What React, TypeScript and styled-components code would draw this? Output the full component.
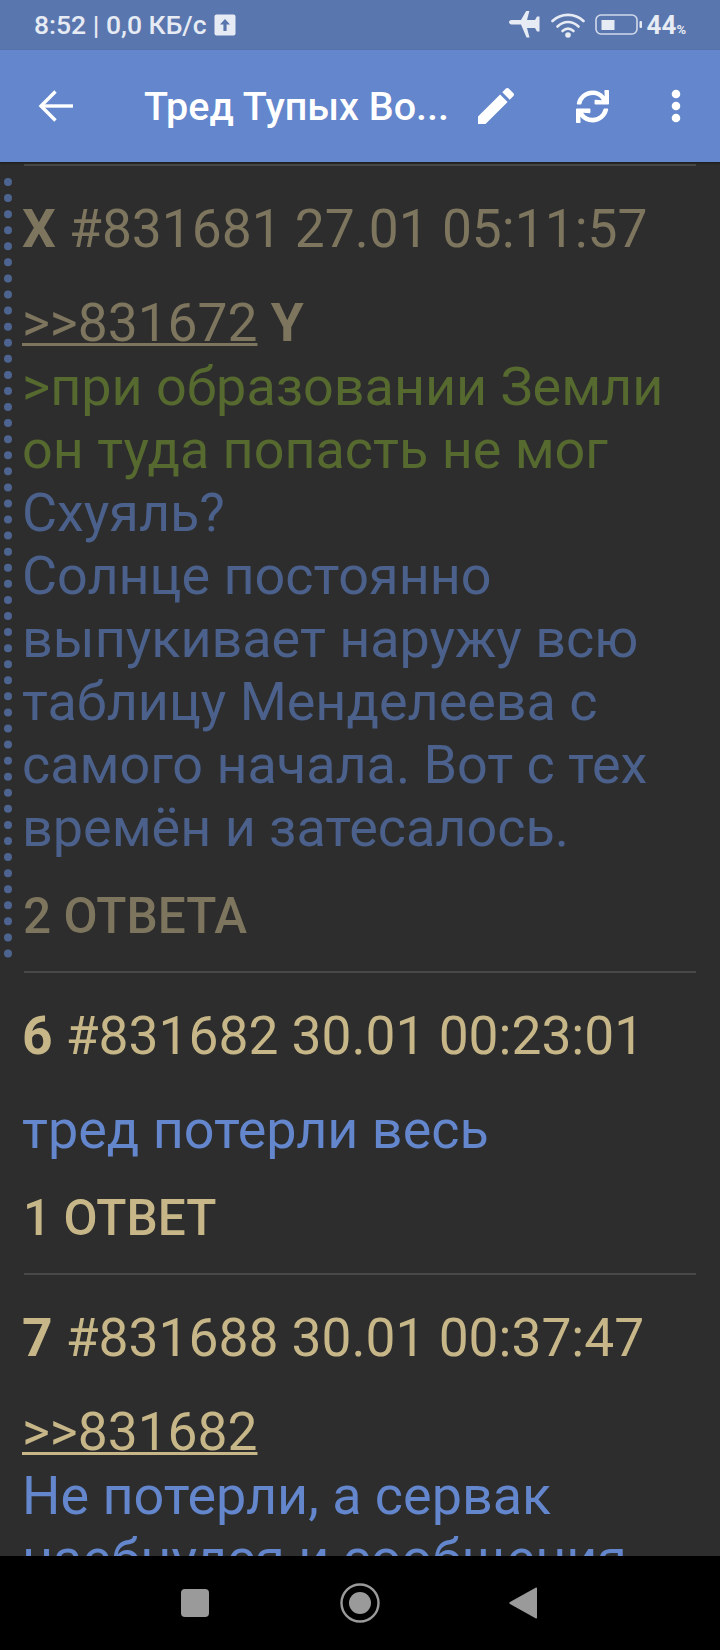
import React from "react";
import styled, { createGlobalStyle } from "styled-components";
import { FaSync } from "react-icons/fa";

const Global = createGlobalStyle`
  html, body { margin: 0; padding: 0; background: #2d2d2d; }
  body { font-family: Roboto, "Liberation Sans", sans-serif; }
`;

const Screen = styled.div`
  width: 720px;
  height: 1650px;
  display: flex;
  flex-direction: column;
  overflow: hidden;
  background: #2d2d2d;
`;

const StatusBar = styled.div`
  height: 49px;
  flex: none;
  background: #5a76ae;
  color: #e6ebf4;
  display: flex;
  align-items: center;
  justify-content: space-between;
  padding: 0 34px 1px 34px;
  font-size: 26.5px;
  font-weight: 500;
`;

const StatusGroup = styled.div`
  display: flex;
  align-items: center;
`;

const StatusText = styled.span``;

const Battery = styled.span`
  font-size: 26px;
  font-weight: 700;
  margin-left: 5px;
  display: flex;
  align-items: baseline;
`;

const Percent = styled.span`
  font-size: 13px;
`;

const AppBar = styled.div`
  height: 112px;
  flex: none;
  background: #6386cc;
  color: #fff;
  display: flex;
  align-items: center;
  position: relative;
  box-shadow: 0 1px 2px rgba(0, 0, 0, 0.45);
`;

const BackSlot = styled.div`
  width: 144px;
  flex: none;
  padding-left: 38px;
  box-sizing: border-box;
  display: flex;
`;

const Title = styled.div`
  width: 328px;
  flex: none;
  font-size: 39.5px;
  font-weight: 500;
  white-space: nowrap;
`;

const Actions = styled.div`
  display: flex;
  align-items: center;
`;

const ActionSlot = styled.div<{ $w: number }>`
  width: ${(p) => p.$w}px;
  flex: none;
  display: flex;
  justify-content: center;
`;

const Content = styled.div`
  flex: 1;
  min-height: 0;
  overflow: hidden;
  background: #2d2d2d;
  padding-top: 2px;
`;

const Post = styled.article<{ $dim?: boolean }>`
  box-sizing: border-box;
  color: ${(p) => (p.$dim ? "#7d755d" : "#c7b788")};
  padding: 32px 24px 27px 22px;
  position: relative;
`;

const Rule = styled.div`
  height: 2px;
  background: #484848;
  margin: 0 24px;
`;

const Dots = styled.div`
  position: absolute;
  left: 4px;
  top: 12px;
  bottom: 13px;
  border-left: 8px dotted #4d6490;
`;

const Header = styled.div`
  font-size: 53.3px;
  line-height: 63px;
  white-space: nowrap;
`;

const Strong = styled.b`
  font-weight: 700;
`;

const Body = styled.div<{ $dim?: boolean }>`
  margin-top: 30px;
  font-size: 53.9px;
  line-height: 63px;
  color: ${(p) => (p.$dim ? "#4b618b" : "#6386cc")};
`;

const Link = styled.span<{ $dim?: boolean }>`
  color: ${(p) => (p.$dim ? "#7d755d" : "#c7b788")};
  font-size: 53.3px;
  text-decoration: underline;
  text-decoration-thickness: 3px;
`;

const Author = styled.b`
  color: #7d755d;
  font-size: 53.3px;
  font-weight: 700;
`;

const Quote = styled.div`
  color: #56692f;
`;

const Replies = styled.div`
  font-size: 49.5px;
  font-weight: 500;
  line-height: 56px;
  margin-top: 29px;
  padding-left: 1px;
`;

const NavBar = styled.div`
  height: 94px;
  flex: none;
  background: #000;
  display: flex;
  align-items: center;
  padding-left: 112px;
`;

const NavIcon = styled.div<{ $w: number }>`
  width: ${(p) => p.$w}px;
  flex: none;
  display: flex;
  justify-content: center;
`;

export default function App() {
  return (
    <Screen>
      <Global />
      <StatusBar>
        <StatusGroup>
          <StatusText>8:52 | 0,0 КБ/с</StatusText>
          <svg width="22" height="22" viewBox="0 0 22 22" style={{ marginLeft: 8 }}>
            <rect x="0.5" y="0.5" width="21" height="21" rx="2" fill="#e6ebf4" />
            <path d="M11 5l5 5.500h-3.400V17h-3.200v-6.500H6z" fill="#5a76ae" />
          </svg>
        </StatusGroup>
        <StatusGroup>
          <svg width="31" height="27" viewBox="0 0 31 27">
            <path d="M0 11.500c0-1 1-2 2.500-2H12L17.500 0h3l-2.500 9.500h8L28 6h2.500v15H28l-2-3.500h-8L20.500 27h-3L12 14H2.500C1 14 0 12.500 0 11.500z" fill="#e6ebf4" transform="translate(0 -.5)" />
          </svg>
          <svg width="34" height="26" viewBox="0 0 34 26" style={{ marginLeft: 11 }}>
            <g fill="none" stroke="#e6ebf4" strokeWidth="2.600" strokeLinecap="round">
              <path d="M1.500 9C10 .8 24 .8 32.500 9" />
              <path d="M6.500 14.500C13 8.500 21 8.500 27.500 14.500" />
              <path d="M11.500 19C15 16 19 16 22.500 19" />
            </g>
            <circle cx="17" cy="23" r="2.800" fill="#e6ebf4" />
          </svg>
          <svg width="47" height="22" viewBox="0 0 47 22" style={{ marginLeft: 10 }}>
            <rect x="1" y="1" width="41" height="19" rx="5" fill="none" stroke="#e6ebf4" strokeWidth="1.600" opacity="0.85" />
            <rect x="6.500" y="6" width="13" height="10" rx="0.500" fill="#e6ebf4" />
            <rect x="44.500" y="7" width="2.500" height="7" rx="1" fill="#e6ebf4" />
          </svg>
          <Battery>
            44<Percent>%</Percent>
          </Battery>
        </StatusGroup>
      </StatusBar>

      <AppBar>
        <BackSlot>
          <svg width="35" height="32" viewBox="0 0 35 32" fill="none" stroke="#fff" strokeWidth="3.400">
            <path d="M35 16H3" />
            <path d="M17.500 1.500L3 16l14.500 14.500" />
          </svg>
        </BackSlot>
        <Title>Тред Тупых Во...</Title>
        <Actions>
          <ActionSlot $w={48}>
            <svg width="36" height="36" viewBox="3 3 18 18" fill="#fff">
              <path d="M3 17.250V21h3.750L17.810 9.940l-3.750-3.750L3 17.250zM20.710 7.040c.39-.39.39-1.020 0-1.410l-2.340-2.340c-.39-.39-1.020-.39-1.410 0l-1.830 1.830 3.750 3.750 1.830-1.830z" />
            </svg>
          </ActionSlot>
          <ActionSlot $w={144}>
            <FaSync size={33} color="#fff" />
          </ActionSlot>
          <ActionSlot $w={24}>
            <svg width="12" height="34" viewBox="0 0 12 34" fill="#fff">
              <circle cx="6" cy="5" r="4.300" />
              <circle cx="6" cy="17" r="4.300" />
              <circle cx="6" cy="29" r="4.300" />
            </svg>
          </ActionSlot>
        </Actions>
      </AppBar>

      <Content>
        <Rule />
        <Post $dim>
          <Dots />
          <Header>
            <Strong>X</Strong> #831681 27.01 05:11:57
          </Header>
          <Body $dim>
            <Link $dim>&gt;&gt;831672</Link> <Author>Y</Author>
            <Quote>&gt;при образовании Земли он туда попасть не мог</Quote>
            Схуяль?
            <br />
            Солнце постоянно выпукивает наружу всю таблицу Менделеева с самого начала. Вот с тех времён и затесалось.
          </Body>
          <Replies>2 ОТВЕТА</Replies>
        </Post>
        <Rule />
        <Post>
          <Header>
            <Strong>6</Strong> #831682 30.01 00:23:01
          </Header>
          <Body>тред потерли весь</Body>
          <Replies>1 ОТВЕТ</Replies>
        </Post>
        <Rule />
        <Post>
          <Header>
            <Strong>7</Strong> #831688 30.01 00:37:47
          </Header>
          <Body>
            <Link>&gt;&gt;831682</Link>
            <br />
            Не потерли, а сервак наебнулся и сообщения пропали
          </Body>
        </Post>
      </Content>

      <NavBar>
        <NavIcon $w={166}>
          <svg width="28" height="28" viewBox="0 0 28 28">
            <rect width="28" height="28" rx="4" fill="#9a9a9a" />
          </svg>
        </NavIcon>
        <NavIcon $w={164}>
          <svg width="40" height="40" viewBox="0 0 40 40">
            <circle cx="20" cy="20" r="18.500" fill="none" stroke="#9a9a9a" strokeWidth="2.400" />
            <circle cx="20" cy="20" r="11" fill="#9a9a9a" />
          </svg>
        </NavIcon>
        <NavIcon $w={161}>
          <svg width="28" height="32" viewBox="0 0 28 32">
            <path d="M27 0.500c.6 0 1 .4 1 1v29c0 .6-.4 1-1 1L1 17c-1-.6-1-1.400 0-2z" fill="#9a9a9a" />
          </svg>
        </NavIcon>
      </NavBar>
    </Screen>
  );
}
